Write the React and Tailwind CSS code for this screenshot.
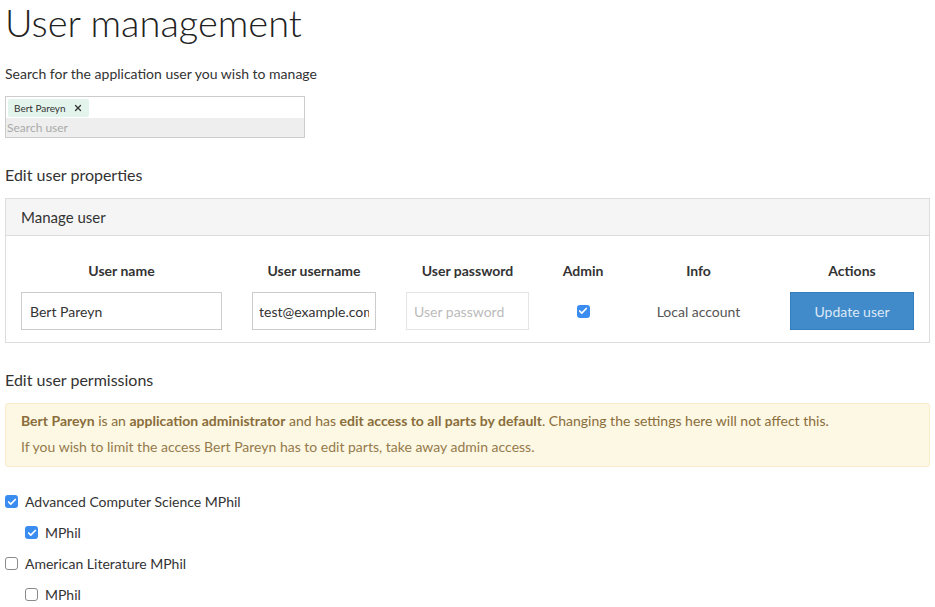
import { Check, X } from 'lucide-react'

function Box({ checked }) {
  return checked ? (
    <span className="flex h-[13px] w-[13px] shrink-0 items-center justify-center rounded-[3px] bg-[#3b8cf0]">
      <Check className="h-[10px] w-[10px] text-white" strokeWidth={4} />
    </span>
  ) : (
    <span className="h-[13px] w-[13px] shrink-0 rounded-[3px] border border-[#8a8a8a] bg-white" />
  )
}

const perms = [
  { name: 'Advanced Computer Science MPhil', checked: true, children: [{ name: 'MPhil', checked: true }] },
  { name: 'American Literature MPhil', checked: false, children: [{ name: 'MPhil', checked: false }] },
]

export default function App() {
  return (
    <div className="min-h-[607px] w-[935px] bg-white px-[5px] text-[#333] font-['Lato',sans-serif]">
      <h1 className="text-[38px] font-light leading-[44px] text-[#222]">User management</h1>
      <p className="mt-[20px] text-[14px] leading-[20px]">Search for the application user you wish to manage</p>

      <div className="mt-[12px] flex w-[300px] flex-col border border-[#ccc]">
        <div className="flex px-[2px] pt-[2px] pb-[1px]">
          <span className="flex h-[18px] items-center gap-[7px] rounded-[2px] bg-[#e3f4ec] px-[6px] text-[10px] text-[#333]">
            Bert Pareyn <X className="h-[10px] w-[10px]" strokeWidth={3} />
          </span>
        </div>
        <div className="h-[19px] bg-[#eee] px-[1px] text-[12px] leading-[19px] text-[#aaa]">Search user</div>
      </div>

      <h2 className="mt-[25px] text-[16px] leading-[24px]">Edit user properties</h2>

      <div className="mt-[11px] border border-[#ddd]">
        <div className="h-[37px] border-b border-[#ddd] bg-[#f5f5f5] px-[15px] text-[15px] leading-[36px]">Manage user</div>
        <div className="grid grid-cols-[231px_154px_153px_78px_153px_154px] pb-[12px] pt-[25px] text-[14px]">
          {['User name', 'User username', 'User password', 'Admin', 'Info', 'Actions'].map(h => (
            <div key={h} className="h-[31px] px-[15px] text-center font-bold leading-[20px]">{h}</div>
          ))}
          <div className="px-[15px]">
            <input readOnly value="Bert Pareyn" className="h-[38px] w-full border border-[#ccc] px-[8px] text-[14px] outline-none" />
          </div>
          <div className="px-[15px]">
            <input readOnly value="test@example.com" className="h-[38px] w-full border border-[#ccc] px-[6px] text-[14px] outline-none" />
          </div>
          <div className="px-[15px]">
            <input readOnly placeholder="User password" className="h-[38px] w-full border border-[#e5e5e5] px-[7px] text-[14px] outline-none placeholder:text-[#bbb]" />
          </div>
          <div className="flex h-[38px] items-center justify-center"><Box checked /></div>
          <div className="flex h-[38px] items-center justify-center text-[14px] text-[#555]">Local account</div>
          <div className="px-[15px]">
            <button className="h-[38px] w-full border border-[#357ebd] bg-[#428bca] text-[14px] text-[#dce9f7]">Update user</button>
          </div>
        </div>
      </div>

      <h2 className="mt-[25px] text-[16px] leading-[24px]">Edit user permissions</h2>

      <div className="mt-[11px] rounded-[3px] border border-[#faebcc] bg-[#fcf8e3] px-[15px] pb-[6px] pt-[4px] text-[14px] leading-[26px] text-[#8a6d3b]">
        <p><b>Bert Pareyn</b> is an <b>application administrator</b> and has <b>edit access to all parts by default</b>. Changing the settings here will not affect this.</p>
        <p className="opacity-90">If you wish to limit the access Bert Pareyn has to edit parts, take away admin access.</p>
      </div>

      <div className="mt-[19px] text-[14px]">
        {perms.map(p => (
          <div key={p.name}>
            <div className="flex h-[31px] items-center gap-[7px]"><Box checked={p.checked} />{p.name}</div>
            {p.children.map(c => (
              <div key={c.name} className="flex h-[31px] items-center gap-[7px] pl-[20px]"><Box checked={c.checked} />{c.name}</div>
            ))}
          </div>
        ))}
      </div>
    </div>
  )
}
